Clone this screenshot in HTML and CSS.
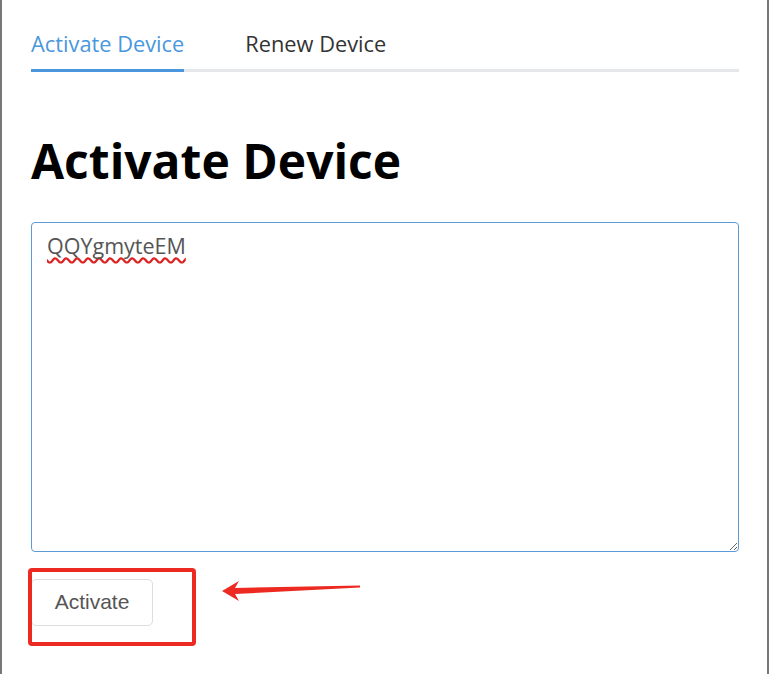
FILE: index.html
```html
<!DOCTYPE html>
<html lang="en">
<head>
  <meta charset="UTF-8">
  <meta name="viewport" content="width=device-width, initial-scale=1.0">
  <title>Activate Device</title>
  <link rel="stylesheet" href="styles.css">
</head>
<body>
  <div class="panel">
    <nav class="tabs">
      <a class="tab active" href="#">Activate Device</a>
      <a class="tab" href="#">Renew Device</a>
    </nav>

    <h1 class="title">Activate Device</h1>

    <form class="activate-form">
      <textarea class="code-input" spellcheck="false">QQYgmyteEM</textarea>
      <div class="actions">
        <button type="button" class="btn">Activate</button>
        <!-- annotation overlay -->
        <span class="mark-box"></span>
        <svg class="mark-arrow" width="140" height="26" viewBox="0 0 140 26">
          <path d="M0 13 L17 3 L13 10 L138 7.5 L138 9.5 L13 16 L17 23 Z" fill="#ec2a22"/>
        </svg>
      </div>
    </form>
  </div>
</body>
</html>
```

FILE: styles.css
```css
html, body {
  margin: 0;
  height: 100%;
}
body {
  font-family: "Open Sans", "Noto Sans", sans-serif;
  background: #fff;
}
.panel {
  box-sizing: border-box;
  height: 100%;
  border-left: 2px solid #777;
  border-right: 2px solid #777;
  padding: 29px 28px 0 29px;
}
.tabs {
  display: flex;
  gap: 61px;
  border-bottom: 3px solid #e5e7ea;
}
.tab {
  font-size: 21.8px;
  color: #333;
  text-decoration: none;
  padding-bottom: 11px;
  margin-bottom: -3px;
  border-bottom: 3px solid transparent;
}
.tab.active {
  color: #4a97dd;
  border-bottom-color: #4a97dd;
}
.title {
  font-size: 48px;
  font-weight: 700;
  color: #000;
  margin: 60px 0 32px;
  line-height: 1.2;
}
.code-input {
  display: block;
  box-sizing: border-box;
  width: 100%;
  height: 330px;
  padding: 8px 15px;
  border: 1px solid #5b9bd5;
  border-radius: 4px;
  font-family: "Open Sans", "Noto Sans", sans-serif;
  font-size: 21.5px;
  color: #555;
  resize: vertical;
  outline: none;
  text-decoration: underline wavy #d22;
  text-decoration-skip-ink: none;
  text-underline-offset: 3px;
}
.actions {
  position: relative;
  padding-top: 27px;
}
.btn {
  width: 122px;
  height: 47px;
  font-family: "Liberation Sans", Arial, sans-serif;
  font-size: 21px;
  color: #555;
  background: #fff;
  border: 1px solid #ddd;
  border-radius: 5px;
  cursor: pointer;
}
.mark-box {
  position: absolute;
  left: -3px;
  top: 16px;
  width: 160px;
  height: 70px;
  border: 4px solid #ec2a22;
  border-radius: 4px;
}
.mark-arrow {
  position: absolute;
  left: 191px;
  top: 26px;
}
```
